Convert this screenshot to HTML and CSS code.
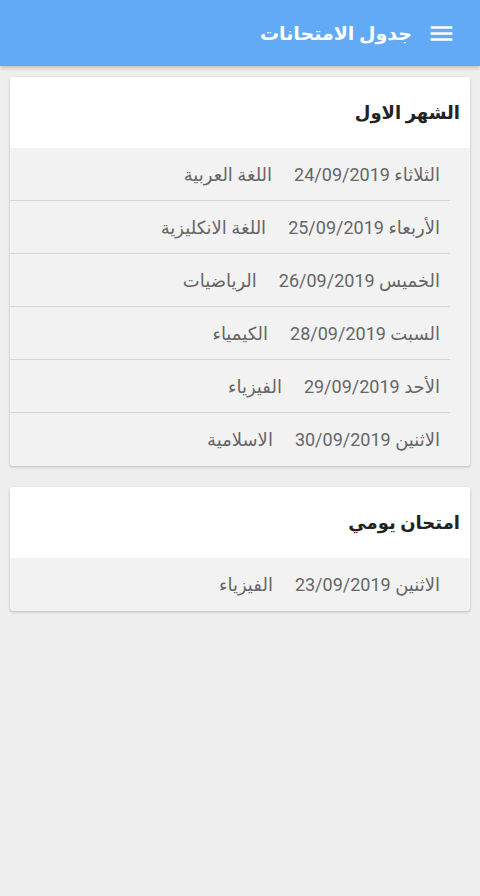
FILE: index.html
```html
<!DOCTYPE html>
<html lang="ar" dir="rtl">
<head>
    <meta charset="UTF-8">
    <meta name="viewport" content="width=device-width, initial-scale=1.0">
    <title>جدول الامتحانات</title>
    <link rel="stylesheet" href="styles.css">
</head>
<body>
    <header class="app-bar">
        <svg class="menu-icon" width="29" height="29" viewBox="0 0 24 24">
            <path d="M3 18h18v-2H3v2zm0-5h18v-2H3v2zm0-7v2h18V6H3z" fill="#fff"/>
        </svg>
        <h1 class="app-title">جدول الامتحانات</h1>
    </header>

    <main class="content">
        <section class="card">
            <h2 class="card-title">الشهر الاول</h2>
            <ul class="exam-list">
                <li class="exam-row"><span class="exam-date">الثلاثاء 24/09/2019</span><span class="exam-subject">اللغة العربية</span></li>
                <li class="exam-row"><span class="exam-date">الأربعاء 25/09/2019</span><span class="exam-subject">اللغة الانكليزية</span></li>
                <li class="exam-row"><span class="exam-date">الخميس 26/09/2019</span><span class="exam-subject">الرياضيات</span></li>
                <li class="exam-row"><span class="exam-date">السبت 28/09/2019</span><span class="exam-subject">الكيمياء</span></li>
                <li class="exam-row"><span class="exam-date">الأحد 29/09/2019</span><span class="exam-subject">الفيزياء</span></li>
                <li class="exam-row"><span class="exam-date">الاثنين 30/09/2019</span><span class="exam-subject">الاسلامية</span></li>
            </ul>
        </section>

        <section class="card">
            <h2 class="card-title">امتحان يومي</h2>
            <ul class="exam-list">
                <li class="exam-row"><span class="exam-date">الاثنين 23/09/2019</span><span class="exam-subject">الفيزياء</span></li>
            </ul>
        </section>
    </main>
</body>
</html>
```

FILE: styles.css
```css
body {
    margin: 0;
    font-family: Roboto, "DejaVu Sans", sans-serif;
    background-color: #eeeeee;
}
.app-bar {
    display: flex;
    align-items: center;
    height: 66px;
    padding: 0 24px 0 0;
    background-color: #63aaf6;
    box-shadow: 0 2px 4px rgba(0, 0, 0, 0.2);
}
.menu-icon {
    margin-left: 15px;
}
.app-title {
    margin: 0;
    color: #ffffff;
    font-size: 19px;
    font-weight: bold;
}
.content {
    display: flex;
    flex-direction: column;
    gap: 21px;
    padding: 11px 10px;
}
.card {
    background-color: #f2f2f2;
    border-radius: 3px;
    box-shadow: 0 1px 3px rgba(0, 0, 0, 0.22);
    overflow: hidden;
}
.card-title {
    margin: 0;
    height: 71px;
    display: flex;
    align-items: center;
    padding-right: 10px;
    background-color: #ffffff;
    color: #222222;
    font-size: 18px;
    font-weight: bold;
}
.exam-list {
    list-style-type: none;
    margin: 0;
    padding: 0;
}
.exam-row {
    display: flex;
    align-items: center;
    gap: 22px;
    height: 52px;
    padding-right: 10px;
    margin-right: 20px;
    border-bottom: 1px solid #d6d6d6;
    color: #666666;
    font-size: 18px;
}
.exam-row:last-child {
    border-bottom: none;
    height: 53px;
}
```
